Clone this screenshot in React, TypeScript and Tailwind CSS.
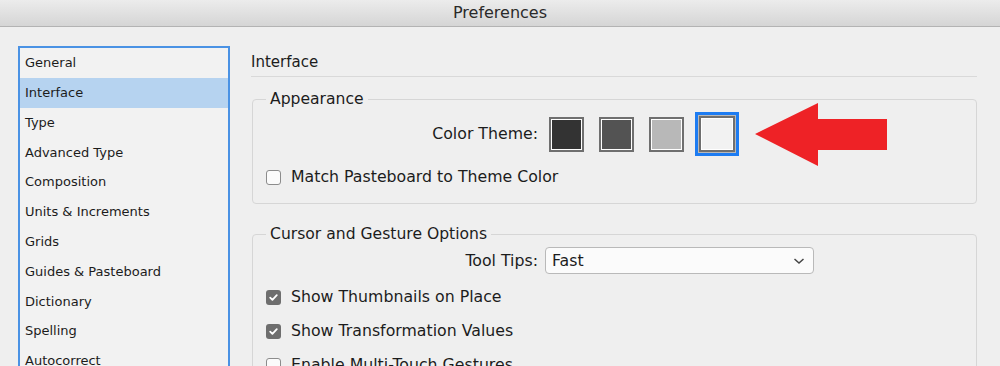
import React from "react";

const items = [
  "General",
  "Interface",
  "Type",
  "Advanced Type",
  "Composition",
  "Units & Increments",
  "Grids",
  "Guides & Pasteboard",
  "Dictionary",
  "Spelling",
  "Autocorrect",
  "Notes",
];

function Swatch({ fill }: { fill: string }) {
  return (
    <div className="w-[35px] h-[35px] border-2 border-[#6f6f6f] bg-white p-px shrink-0">
      <div className="w-full h-full" style={{ background: fill }} />
    </div>
  );
}

function Checkbox({ checked }: { checked?: boolean }) {
  if (checked) {
    return (
      <div className="w-[15px] h-[15px] rounded-[3px] bg-[#6e6e6e] flex items-center justify-center shrink-0">
        <svg width="11" height="11" viewBox="0 0 11 11">
          <path d="M2.2 5.6 L4.4 7.8 L8.8 3.2" fill="none" stroke="#fff" strokeWidth="1.8" strokeLinecap="round" strokeLinejoin="round" />
        </svg>
      </div>
    );
  }
  return <div className="w-[15px] h-[15px] rounded-[3px] border border-[#8c8c8c] bg-[#fbfbfb] shrink-0" />;
}

export default function App() {
  return (
    <div
      className="w-[1000px] h-[366px] overflow-hidden bg-[#efefef] text-[#1c1c1c]"
      style={{ fontFamily: '"DejaVu Sans", "Liberation Sans", sans-serif' }}
    >
      {/* Title bar */}
      <div className="h-[27px] border-b border-[#b3b3b3] bg-gradient-to-b from-[#ececec] to-[#d5d5d5] flex items-center justify-center">
        <span className="text-[16px] leading-[20px] text-[#2a2a2a]">Preferences</span>
      </div>

      <div className="flex">
        {/* Sidebar */}
        <div className="ml-[18px] mt-[19px] w-[212px] border-2 border-[#4a92e4] bg-[#f2f2f2] shrink-0">
          {items.map((it) => (
            <div
              key={it}
              className={`h-[29.8px] flex items-center pl-[5px] text-[13px] ${
                it === "Interface" ? "bg-[#b6d3f0]" : ""
              }`}
            >
              {it}
            </div>
          ))}
        </div>

        {/* Right panel */}
        <div className="ml-[21px] w-[726px]">
          <div className="mt-[25px] pb-[4px] border-b border-[#d9d9d9] text-[15px] leading-[20px]">
            Interface
          </div>

          <fieldset className="mt-[12px] ml-px border border-[#d6d6d6] rounded-[4px] pb-[16px]">
            <legend className="ml-[13px] px-[4px] text-[15.6px] leading-[20px]">Appearance</legend>
            <div className="flex items-center mt-[3px] h-[44px]">
              <div className="w-[285px] text-right text-[15.75px] leading-[20px]">Color Theme:</div>
              <div className="ml-[11px]">
                <Swatch fill="#333333" />
              </div>
              <div className="ml-[15px]">
                <Swatch fill="#535353" />
              </div>
              <div className="ml-[15px]">
                <Swatch fill="#b8b8b8" />
              </div>
              <div className="ml-[11px] p-[3px] bg-[#1d7cf2]">
                <div className="p-px bg-[#b9b9b9]">
                  <div className="w-[36px] h-[36px] border-2 border-[#6f6f6f] bg-white p-px">
                    <div className="w-full h-full bg-[#f2f2f2]" />
                  </div>
                </div>
              </div>
              <svg className="ml-[16px] -my-[10px] shrink-0" width="132" height="63" viewBox="0 0 132 63">
                <polygon points="0,31 63,0 63,16 132,16 132,47 63,47 63,63" fill="#ee2226" />
              </svg>
            </div>
            <div className="flex items-center mt-[11px] ml-[13px] h-[20px]">
              <Checkbox />
              <span className="ml-[10px] text-[15.75px] leading-[20px]">Match Pasteboard to Theme Color</span>
            </div>
          </fieldset>

          <fieldset className="mt-[20px] ml-px border border-[#d6d6d6] rounded-[4px] pb-[16px]">
            <legend className="ml-[13px] px-[4px] text-[15.6px] leading-[20px]">Cursor and Gesture Options</legend>
            <div className="flex items-center mt-[3px]">
              <div className="w-[285px] text-right text-[15.75px] leading-[20px]">Tool Tips:</div>
              <div className="ml-[7px] w-[269px] h-[27px] rounded-[4px] border border-[#b9b9b9] bg-[#fbfbfb] flex items-center justify-between pl-[6px] pr-[8px]">
                <span className="text-[15.75px] leading-[20px]">Fast</span>
                <svg width="12" height="8" viewBox="0 0 12 8">
                  <path d="M1.5 2 L6 6 L10.5 2" fill="none" stroke="#444" strokeWidth="1.5" />
                </svg>
              </div>
            </div>
            <div className="flex items-center mt-[13px] ml-[13px] h-[20px]">
              <Checkbox checked />
              <span className="ml-[10px] text-[15.75px] leading-[20px]">Show Thumbnails on Place</span>
            </div>
            <div className="flex items-center mt-[14px] ml-[13px] h-[20px]">
              <Checkbox checked />
              <span className="ml-[10px] text-[15.75px] leading-[20px]">Show Transformation Values</span>
            </div>
            <div className="flex items-center mt-[14px] ml-[13px] h-[20px]">
              <Checkbox />
              <span className="ml-[10px] text-[15.75px] leading-[20px]">Enable Multi-Touch Gestures</span>
            </div>
          </fieldset>
        </div>
      </div>
    </div>
  );
}
